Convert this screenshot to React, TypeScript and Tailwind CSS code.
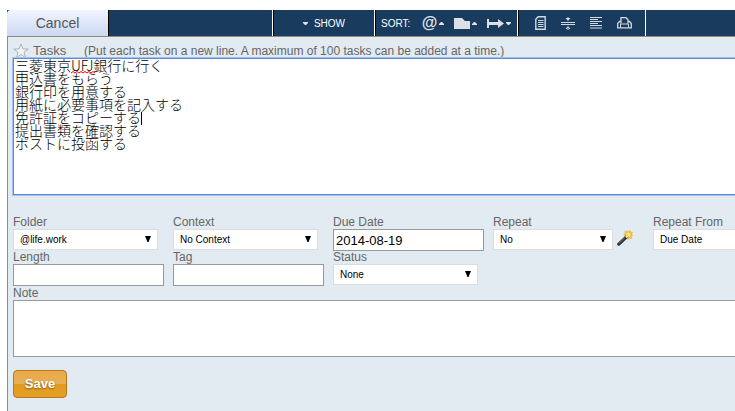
import { useState } from "react";
import type { ReactNode } from "react";

const initialTasks = [
  "三菱東京UFJ銀行に行く",
  "申込書をもらう",
  "銀行印を用意する",
  "用紙に必要事項を記入する",
  "免許証をコピーする",
  "提出書類を確認する",
  "ポストに投函する",
].join("\n");

function Caret({ up = false }: { up?: boolean }) {
  return (
    <svg width="5" height="3" viewBox="0 0 5 3" className="shrink-0" fill="#dfe3e8">
      <path d={up ? "M0 3V2L2 0H3L5 2V3Z" : "M0 0H5V1L3 3H2L0 1Z"} />
    </svg>
  );
}

function ToolButton({ label, children }: { label: string; children: ReactNode }) {
  return (
    <button type="button" aria-label={label} className="flex items-center gap-0.5">
      {children}
    </button>
  );
}

function Toolbar() {
  return (
    <div className="flex h-[27px] border-b border-[#8f8b80] bg-[#193b5e] text-[10px] text-white">
      <button
        type="button"
        className="w-[101px] shrink-0 rounded-tl-sm bg-linear-to-b from-[#f1f5fe] to-[#cbd8f2] text-sm text-[#555]"
      >
        Cancel
      </button>
      <div className="w-[165px] shrink-0 border-l border-r border-l-black border-r-white" />
      <button
        type="button"
        className="flex w-[102px] shrink-0 items-center justify-center gap-1.5 border-l border-r border-l-black border-r-white"
      >
        <Caret />
        SHOW
      </button>
      <div className="flex w-[143px] shrink-0 items-center border-l border-r border-l-black border-r-white pr-1.5 pl-[5px]">
        <span className="mr-auto">SORT:</span>
        <div className="flex items-center gap-2.5">
          <ToolButton label="Sort by context">
            <span className="text-base leading-4 font-bold text-[#dfe3e8] italic">@</span>
            <Caret up />
          </ToolButton>
          <ToolButton label="Sort by folder">
            <svg width="16" height="11" viewBox="0 0 16 11" fill="#dcdfe3">
              <path d="M0 0H8L11 3H16V11H0Z" />
            </svg>
            <Caret up />
          </ToolButton>
          <ToolButton label="Sort by due date">
            <svg width="17" height="9" viewBox="0 0 17 9" fill="#dcdfe3">
              <path d="M0 0H2V3H11V0L17 4.5L11 9V6H2V9H0Z" />
            </svg>
            <Caret />
          </ToolButton>
        </div>
      </div>
      <div className="flex w-32 shrink-0 items-center justify-between border-l border-r border-l-black border-r-white pr-[13px] pl-4">
        <ToolButton label="Show notes">
          <svg width="11" height="14" viewBox="0 0 11 14" fill="none" stroke="#d2d9e0">
            <path strokeWidth="1.4" d="M3.2 0.8H10.2V13.2H0.8V3.2Z" />
            <path d="M3 4.5H8.5M3 6.5H8.5M3 8.5H8.5M3 10.5H8.5" />
          </svg>
        </ToolButton>
        <ToolButton label="Collapse">
          <svg width="14" height="13" viewBox="0 0 14 13" fill="#d2d9e0">
            <path d="M4.5 1H9.5L7 4Z M6.5 0H7.5V2H6.5Z M4.5 12H9.5L7 9Z M6.5 11H7.5V13H6.5Z" />
            <path d="M0 5H14V6H0Z M0 7H14V8H0Z" />
          </svg>
        </ToolButton>
        <ToolButton label="Multi-line view">
          <svg width="12" height="12" viewBox="0 0 12 12" stroke="#d2d9e0">
            <path d="M0 0.5H12M0 2.5H8M0 4.5H12M0 6.5H8M0 8.5H12M0 11H12" />
          </svg>
        </ToolButton>
        <ToolButton label="Print">
          <svg width="15" height="12" viewBox="0 0 15 12" fill="none" stroke="#d2d9e0">
            <path strokeWidth="1.3" d="M4 6.5V0.7H9L11 2.7V6.5" />
            <path strokeWidth="1.3" d="M4 4.5H2.5L0.7 6.5V10.8H14.3V6.5L12.5 4.5H11" />
            <path d="M3.5 7H11.5V10.5M3.5 7V10.5" />
          </svg>
        </ToolButton>
      </div>
      <div className="flex-1" />
    </div>
  );
}

type FieldProps = { id: string; label: string; children: ReactNode };

function Field({ id, label, children }: FieldProps) {
  return (
    <div className="w-40 shrink-0">
      <label htmlFor={id} className="block h-[13px] text-xs leading-[13px]">
        {label}
      </label>
      <div className="flex h-[22px] items-start">{children}</div>
    </div>
  );
}

function Select({ id, value, narrow = false }: { id: string; value: string; narrow?: boolean }) {
  return (
    <div className={narrow ? "relative w-[120px]" : "relative w-[145px]"}>
      <select
        id={id}
        className="block h-[21px] w-full appearance-none border border-[#dcdcdc] bg-white pl-1.5 text-[10px] text-black"
      >
        <option>{value}</option>
      </select>
      <svg
        width="6"
        height="6"
        viewBox="0 0 6 6"
        className="pointer-events-none absolute top-[7px] right-[7px]"
      >
        <path d="M0 0H6L3.5 6H2.5Z" />
      </svg>
    </div>
  );
}

function TextInput({ id, value = "" }: { id: string; value?: string }) {
  return (
    <input
      id={id}
      type="text"
      defaultValue={value}
      className="h-[22px] w-[151px] border border-[#999] bg-white px-0.5 text-[13px] text-black"
    />
  );
}

function Wand() {
  return (
    <svg width="16" height="16" viewBox="0 0 16 16">
      <path
        d="M10.5 0L11.5 1.5L13.5 0L14 2H16L15 4L16 5.5L14.5 6.5L15 9L12.5 8.5L11 10L10 8L7 7L7.5 5L6 3.5L8 3L7.5 0.5L9.5 1.5Z"
        fill="#f2bc35"
      />
      <circle cx="11.3" cy="4.7" r="2.2" fill="#fbe58a" />
      <path d="M1.8 14.2L9.6 6.8" stroke="#303030" strokeWidth="3.2" strokeLinecap="round" />
      <path d="M1.8 13.4L7.8 7.8" stroke="#858585" strokeWidth="0.8" />
      <path d="M9 7.4L10.8 5.7" stroke="#e2e2e2" strokeWidth="2.4" />
    </svg>
  );
}

export default function App() {
  const [tasks, setTasks] = useState(initialTasks);

  return (
    <div className="flex min-h-screen flex-col overflow-hidden bg-white pt-2.5 pl-[7px] font-['Liberation_Sans',Arial,sans-serif]">
      <Toolbar />
      <form className="flex-1 border-l border-[#8c8c8c] bg-[#e2ebf1] pb-3 pl-[5px] text-[#666]">
        <div className="flex h-[21px] items-center pt-1.5 text-[13px] leading-4">
          <svg width="16" height="16" viewBox="0 0 16 16" className="mr-1 shrink-0">
            <path
              d="M8 1L10 6H15.3L11 9.3L12.6 14.8L8 11.5L3.4 14.8L5 9.3L0.7 6H6Z"
              fill="#eef2f5"
              stroke="#aeb2b4"
            />
          </svg>
          <label htmlFor="tasks" className="w-[51px] shrink-0">
            Tasks
          </label>
          <span className="text-xs leading-4 whitespace-nowrap">
            (Put each task on a new line. A maximum of 100 tasks can be added at a time.)
          </span>
        </div>
        <div className="relative">
          <textarea
            id="tasks"
            value={tasks}
            onChange={(e) => setTasks(e.target.value)}
            spellCheck={false}
            className="block h-[137px] w-full resize-none border border-r-0 border-[#5f8bd6] bg-white px-px py-0 font-['Noto_Sans_CJK_JP',sans-serif] text-sm leading-[13px] font-light text-black ring-1 ring-[#a3c0ee] outline-none"
          />
          {/* spelling mark and text cursor */}
          <svg width="24" height="3" viewBox="0 0 24 3" fill="none" className="pointer-events-none absolute top-[13px] left-[58px]">
            <path d="M0 2L2 0.5L4 2L6 0.5L8 2L10 0.5L12 2L14 0.5L16 2L18 0.5L20 2L22 0.5L24 2" stroke="#f00" />
          </svg>
          <span className="pointer-events-none absolute top-[54px] left-32 h-[13px] w-px bg-black" />
        </div>

        <div className="mt-[21px] flex">
          <Field id="folder" label="Folder">
            <Select id="folder" value="@life.work" />
          </Field>
          <Field id="context" label="Context">
            <Select id="context" value="No Context" />
          </Field>
          <Field id="due" label="Due Date">
            <TextInput id="due" value="2014-08-19" />
          </Field>
          <Field id="repeat" label="Repeat">
            <Select id="repeat" value="No" narrow />
            <button type="button" aria-label="Advanced repeat" className="mt-px ml-1">
              <Wand />
            </button>
          </Field>
          <Field id="repeat-from" label="Repeat From">
            <Select id="repeat-from" value="Due Date" />
          </Field>
        </div>
        <div className="flex">
          <Field id="length" label="Length">
            <TextInput id="length" />
          </Field>
          <Field id="tag" label="Tag">
            <TextInput id="tag" />
          </Field>
          <Field id="status" label="Status">
            <Select id="status" value="None" />
          </Field>
        </div>

        <label htmlFor="note" className="block text-xs leading-[14px]">
          Note
        </label>
        <textarea
          id="note"
          className="block h-[57px] w-full resize-none border border-r-0 border-[#999] bg-white p-0.5 text-[13px] text-black"
        />
        <button
          type="button"
          className="mt-[13px] block h-7 w-[54px] rounded-sm border border-[#b9791a] bg-[linear-gradient(#e8a94a_0%,#e8af57_50%,#e29a20_50%,#e5a02a_100%)] text-[13px] font-bold text-white text-shadow-[0_1px_2px_#8a5a10]"
        >
          Save
        </button>
      </form>
    </div>
  );
}
